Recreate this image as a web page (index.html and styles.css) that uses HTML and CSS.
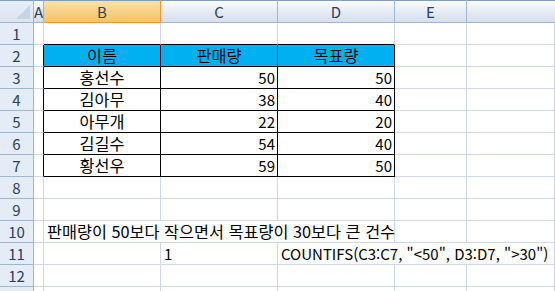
FILE: index.html
```html
<!DOCTYPE html>
<html lang="ko">
<head>
<meta charset="utf-8">
<link rel="stylesheet" href="styles.css">
</head>
<body>
<div class="sheet">
  <div class="ch corner"><span class="tri"></span></div>
  <div class="ch">A</div>
  <div class="ch sel">B</div>
  <div class="ch">C</div>
  <div class="ch">D</div>
  <div class="ch">E</div>
  <div class="ch last"></div>

  <div class="rh">1</div><div class="c"></div><div class="c bb"></div><div class="c bb"></div><div class="c bb"></div><div class="c"></div><div class="c"></div>

  <div class="rh">2</div><div class="c br"></div><div class="c t hd ko">이름</div><div class="c t hd ko">판매량</div><div class="c t hd ko">목표량</div><div class="c"></div><div class="c"></div>

  <div class="rh">3</div><div class="c br"></div><div class="c t ctr ko">홍선수</div><div class="c t num">50</div><div class="c t num">50</div><div class="c"></div><div class="c"></div>
  <div class="rh">4</div><div class="c br"></div><div class="c t ctr ko">김아무</div><div class="c t num">38</div><div class="c t num">40</div><div class="c"></div><div class="c"></div>
  <div class="rh">5</div><div class="c br"></div><div class="c t ctr ko">아무개</div><div class="c t num">22</div><div class="c t num">20</div><div class="c"></div><div class="c"></div>
  <div class="rh">6</div><div class="c br"></div><div class="c t ctr ko">김길수</div><div class="c t num">54</div><div class="c t num">40</div><div class="c"></div><div class="c"></div>
  <div class="rh">7</div><div class="c br"></div><div class="c t ctr ko">황선우</div><div class="c t num">59</div><div class="c t num">50</div><div class="c"></div><div class="c"></div>

  <div class="rh">8</div><div class="c"></div><div class="c"></div><div class="c"></div><div class="c"></div><div class="c"></div><div class="c"></div>
  <div class="rh">9</div><div class="c"></div><div class="c"></div><div class="c"></div><div class="c"></div><div class="c"></div><div class="c"></div>

  <div class="rh">10</div><div class="c"></div><div class="c txt ko span3">판매량이 50보다 작으면서 목표량이 30보다 큰 건수</div><div class="c"></div><div class="c"></div>

  <div class="rh">11</div><div class="c"></div><div class="c"></div><div class="c txt">1</div><div class="c txt span3">COUNTIFS(C3:C7, "&lt;50", D3:D7, "&gt;30")</div>

  <div class="rh">12</div><div class="c"></div><div class="c"></div><div class="c"></div><div class="c"></div><div class="c"></div><div class="c"></div>
  <div class="rh"></div><div class="c"></div><div class="c"></div><div class="c"></div><div class="c"></div><div class="c"></div><div class="c"></div>
</div>
</body>
</html>
```

FILE: styles.css
```css
html, body {
  margin: 0;
  padding: 0;
  background: #ffffff;
  overflow: hidden;
}

.sheet {
  display: grid;
  grid-template-columns: 34px 10px 117px 117px 117px 72px 1fr;
  grid-template-rows: 23px repeat(13, 22px);
  width: 555px;
  height: 291px;
  overflow: hidden;
  font-family: "Noto Sans CJK KR", "Noto Sans", sans-serif;
  font-size: 15px;
  color: #000000;
}

.sheet > div {
  box-sizing: border-box;
  min-width: 0;
}

.ch {
  border-top: 1px solid #7f9dc0;
  border-right: 1px solid #9eb6ce;
  border-bottom: 1px solid #9eb6ce;
  background: linear-gradient(#f9fcfd, #e4eaf4 55%, #d6dfec);
  color: #27415f;
  display: flex;
  align-items: center;
  justify-content: center;
  line-height: 1;
}

.ch.last {
  border-right: none;
}

.ch.sel {
  background: linear-gradient(#fae2ad, #f6d084 55%, #f2c466);
  border-right: 1px solid #f29536;
  border-bottom: 1px solid #f29536;
}

.corner {
  position: relative;
  background: linear-gradient(#e8eef7, #dce5f1);
}

.tri {
  position: absolute;
  right: 3px;
  bottom: 3px;
  width: 0;
  height: 0;
  border-left: 14px solid transparent;
  border-bottom: 14px solid #c7d4e6;
}

.rh {
  background: #e4ecf7;
  border-right: 1px solid #9eb6ce;
  border-bottom: 1px solid #9eb6ce;
  color: #27415f;
  display: flex;
  align-items: center;
  justify-content: center;
  line-height: 1;
}

.c {
  border-right: 1px solid #d0d7e5;
  border-bottom: 1px solid #d0d7e5;
  display: flex;
  align-items: center;
  line-height: 1;
  white-space: nowrap;
  padding: 0 3px;
}

.c.ko {
  font-size: 16.3px;
}

.c.bb {
  border-bottom-color: #000000;
}

.c.br {
  border-right-color: #000000;
}

.c.t {
  border-right-color: #000000;
  border-bottom-color: #000000;
}

.c.hd {
  background: #00b0f0;
  justify-content: center;
}

.c.ctr {
  justify-content: center;
}

.c.num {
  justify-content: flex-end;
  padding-right: 2px;
}

.c.txt {
  justify-content: flex-start;
}

.c.span3 {
  grid-column: span 3;
}
```
